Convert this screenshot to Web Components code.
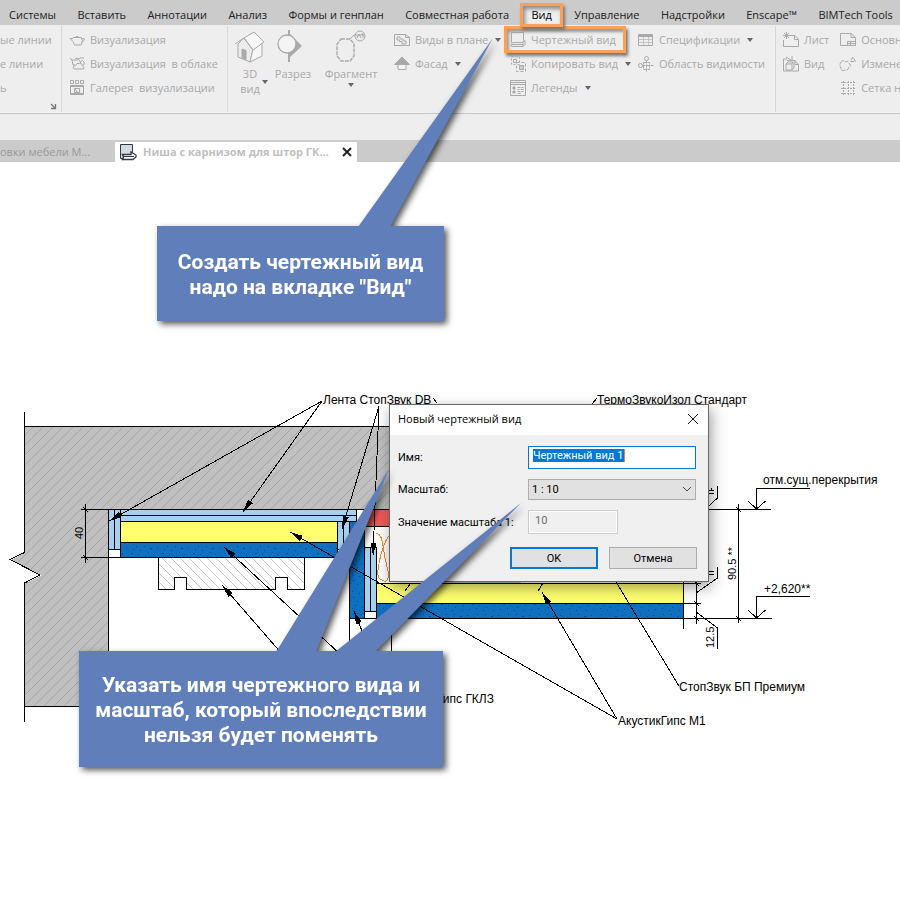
<!DOCTYPE html>
<html lang="ru">
<head>
<meta charset="utf-8">
<title>Чертежный вид</title>
<style>
html, body { margin: 0; background: #fff; }
body { font: 11px/16px "Open Sans", "Noto Sans", sans-serif; color: #222; overflow-x: hidden; }
</style>
</head>
<body>
<app-shell></app-shell>
<script>
const ICONS = {
  teapot: '<path d="M4 5.500h8l1.500 3-1.500 4.500H5.500L4 9.500 1 6.500h3M6 5.500Q8 3 10 5.500M13 7q2.500-1.500 2.500 0T12.800 10.500"/>',
  cloud: '<path d="M3 4h6l2-2h4M3 4 1 2M3 4l1 5h2M6 3q2-2 4 0M10 4l2 3M5 13q-2-3 1.500-3.500 1-3 4-2 3-.5 3 2.500 2.500 1 1 3zM11 6q3-3 4 0t-1 3"/>',
  gallery: '<path d="M1.500 .5h3v3h-3zM6.500 .5h3v3h-3zM11.500 .5h3v3h-3z"/><path d="M1.500 5.500h13v9h-13z"/><path d="M1.500 6.500h13M1.500 13.500h13"/><path d="M5.500 8.500h5v4h-5zM6 9l2 3"/>',
  plan: '<path d="M.5 2.500h11l4 3v8H.5zM11.500 2.500v3h4M3 5h3v2h3v2h3v3H8V9.500H5.500V8H3z"/>',
  elevation: '<path d="M8 1 .5 8.500h15z" fill="currentColor"/><path d="M4 8.500h8v5H4z" fill="#f4f4f4"/>',
  drafting: '<path d="M1.500 .5h12v8M1.500 .5v10M3 10.500h9l3-2v4l-2 2H1.500q-2-2 1.500-4M2 12.500h11M13 14.500v-4"/>',
  duplicate: '<path d="M1.500 .5h8v8h-8z" stroke-dasharray="2 2"/><path d="M3.500 3.500h3v3h-3z"/><path d="M6.500 6.500h9v9h-9z" stroke-dasharray="3 2"/><path d="M9.500 9.500h4v4h-4z" fill="#ccc"/>',
  legend: '<path d="M.5 .5h15v15H.5z"/><path d="M1 2.500h14M1 4.500h14"/><path d="M3 7h2v2H3z" fill="currentColor"/><circle cx="4" cy="12" r="1.200" fill="currentColor"/><path d="M7.500 7.500h3m1 0h2M7.500 9.500h2m1 0h3M7.500 11.500h3m1 0h2M7.500 13.500h3"/>',
  table: '<path d="M.5 2.500h14v11H.5zM.5 4.500h14"/><path d="M.5 7.500h14M.5 10.500h14M5.500 5v8M10.500 5v8" stroke="#c4c4c4"/><path d="M1 3.500h13" />',
  scope: '<circle cx="8.500" cy="2.500" r="2"/><circle cx="2.500" cy="9.500" r="2"/><path d="M8.500 4.500V16M4.500 9.500H16M5.500 6.500h6v7h-6z" stroke-dasharray="3 1"/>',
  sheet: '<path d="M7 3.500h5l3.500 4v7H.5V8M11.500 3.500v4h4M3.500 0v7M0 3.500h7M1 1l5 5M6 1 1 6"/>',
  place: '<path d="M9 4.500h3l3.500 4v6.500H.5v-12H4M12 4.500v4h3.500M3 1l5 3M9 0v4.500H4M3 8h6v6H3zM3 8l2-2h5L9 8m0 6 2-2V6"/>',
  titleblock: '<path d="M.5 1.500H11l4.500 4v8H.5zM11 1.500v4h4.500M7.500 9.500h8v4h-8zM10.500 9.500v4M7 11.500h8"/>',
  revision: '<path d="M13 1 10.500 5.500h5zM1 6q2-3 4 0 3-2 4 1 3 3 0 4-1 4-4 3-4 2-4-2Q-1 9 1 6z" stroke-dasharray="4 1"/>',
  grid: '<path d="M1 2.500h14M1 8.500h14M1 13.500h14M3.500 1v14M8.500 1v14M13.500 1v14" stroke-dasharray="2 1"/>',
  launcher: '<path d="m6 6 4 4M10.500 6v4.500H6" stroke="#777" stroke-width="1.300"/>',
  house: '<path d="M4 14 10 8l9 11-3 13-12-5z" fill="#ececec"/><path d="m16 32 12-6V12l-9 7z" fill="#f6f6f6"/><path d="m10 8 10-6 10 10-11 8z" fill="#f8f8f8"/><path d="m1 14 9-6 9 12"/><path d="m8 19 4 1.500v9L8 28z" fill="#aaa"/>',
  section: '<path d="M12 0v32" stroke-width="2"/><path d="M12 3l13 13-13 12z" fill="#aaa" stroke="none"/><circle cx="10" cy="14" r="9" fill="#f4f4f4" stroke-width="1.300"/>',
  callout: '<path d="M6 9h9l4 5v12l-4 5H6l-4-5V14z" stroke-dasharray="4 1" stroke-width="1.400"/><path d="m15 9 4-4h11"/><circle cx="25" cy="6" r="5"/><path d="M22 8l2-4 2 4M26 4h2v4"/>'
};

const define = (name, html, init) => {
  const template = document.createElement('template');
  template.innerHTML = html;
  customElements.define(name, class extends HTMLElement {
    connectedCallback() {
      if (this.shadowRoot) return;
      const root = this.attachShadow({ mode: 'open' });
      root.append(template.content.cloneNode(true));
      if (init) init(this, root);
    }
  });
};

define('ui-icon', `<style>:host{display:block;flex:none;width:16px;height:16px}svg{display:block;width:100%;height:100%;overflow:visible;fill:none;stroke:currentColor}</style><svg aria-hidden="true"></svg>`,
  (el, root) => {
    const svg = root.querySelector('svg');
    svg.setAttribute('viewBox', el.hasAttribute('large') ? '0 0 32 32' : '0 0 16 16');
    svg.innerHTML = ICONS[el.getAttribute('name')];
  });

define('ribbon-item', `<style>
:host{display:block;position:relative;color:#a9a9a9}
button{display:flex;align-items:center;gap:5px;height:24px;margin:0;padding:0;border:0;background:none;color:inherit;font:inherit;white-space:pre}
i{display:none;border:3px solid transparent;border-top:4px solid #666;border-bottom:0;margin-left:2px}
:host([menu]) i{display:block}
:host([big]) button{flex-direction:column;gap:4px;width:100%;height:auto;line-height:15px;padding-top:2px;text-align:center}
:host([big]) ui-icon{width:32px;height:32px}
:host([big]) i{margin:-2px 0 0}
:host([side]) i{position:absolute;right:4px;top:54px}
:host([marked])::after{content:"";position:absolute;inset:-2px -2px -1px -6px;border:3px solid #fba056;box-shadow:2px 3px 3px #777,inset 2px 3px 3px #999;pointer-events:none}
</style><button type="button"><span><slot></slot></span><i></i></button>`,
  (el, root) => {
    const name = el.getAttribute('icon');
    if (!name) return;
    const icon = document.createElement('ui-icon');
    icon.setAttribute('name', name);
    if (el.hasAttribute('big')) icon.setAttribute('large', '');
    root.querySelector('button').prepend(icon);
  });

define('menu-tabs', `<style>
:host{display:block;background:#cbcbcb}
nav{display:flex;justify-content:space-between;align-items:center;height:25px;padding:4px 7px 0 9px;box-sizing:border-box}
button{border:0;background:none;padding:0;font:inherit;color:#222;white-space:nowrap}
.on{position:relative;z-index:1;margin:0 -10px;padding:0 8px;height:24px;border:3px solid #fba056;background:#eee;box-shadow:2px 3px 3px #777,inset 2px 3px 4px #888;color:#000}
</style><nav></nav>`, (el, root) => {
  for (const t of ['Системы','Вставить','Аннотации','Анализ','Формы и генплан','Совместная работа','Вид','Управление','Надстройки','Enscape™','BIMTech Tools']) {
    const b = document.createElement('button');
    b.type = 'button'; b.textContent = t; if (t === 'Вид') b.className = 'on';
    root.querySelector('nav').append(b);
  }
});

define('ribbon-panel', `<style>:host{display:flex;position:relative;box-sizing:border-box;height:86px;border-right:1px solid #d8d8d8;padding-top:2px}</style><slot></slot>`);
define('ribbon-stack', `<style>:host{display:block;flex:none}</style><slot></slot>`);

define('ribbon-bar', `<style>
:host{display:block;background:#eee;border-bottom:1px solid #c8c8c8;overflow:hidden}
.row{display:flex;padding:1px 0}
.a{flex:none;width:62px}.b{flex:none;width:166px;padding-left:7px}.c{flex:1;min-width:0}.d{flex:none;width:124px;padding-left:7px;border:0;gap:11px}
.a ui-icon{position:absolute;right:0;bottom:-2px}
.v{width:44px}.w{width:42px}.x{width:74px;margin-right:6px}
.p{width:116px}.q{width:128px}
.q ribbon-item[marked]{width:114px}
</style><div class="row">
<ribbon-panel class="a"><ribbon-stack><ribbon-item>ые линии</ribbon-item><ribbon-item>е линии</ribbon-item><ribbon-item>ь</ribbon-item></ribbon-stack><ui-icon name="launcher"></ui-icon></ribbon-panel>
<ribbon-panel class="b"><ribbon-stack><ribbon-item icon="teapot">Визуализация</ribbon-item><ribbon-item icon="cloud">Визуализация  в облаке</ribbon-item><ribbon-item icon="gallery">Галерея  визуализации</ribbon-item></ribbon-stack></ribbon-panel>
<ribbon-panel class="c">
<ribbon-item class="v" big side menu icon="house">3D<br>вид</ribbon-item><ribbon-item class="w" big icon="section">Разрез</ribbon-item><ribbon-item class="x" big menu icon="callout">Фрагмент</ribbon-item>
<ribbon-stack class="p"><ribbon-item menu icon="plan">Виды в плане</ribbon-item><ribbon-item menu icon="elevation">Фасад</ribbon-item></ribbon-stack>
<ribbon-stack class="q"><ribbon-item marked icon="drafting">Чертежный вид</ribbon-item><ribbon-item menu icon="duplicate">Копировать вид</ribbon-item><ribbon-item menu icon="legend">Легенды</ribbon-item></ribbon-stack>
<ribbon-stack><ribbon-item menu icon="table">Спецификации</ribbon-item><ribbon-item icon="scope">Область видимости</ribbon-item></ribbon-stack>
</ribbon-panel>
<ribbon-panel class="d"><ribbon-stack><ribbon-item icon="sheet">Лист</ribbon-item><ribbon-item icon="place">Вид</ribbon-item></ribbon-stack><ribbon-stack><ribbon-item icon="titleblock">Основн</ribbon-item><ribbon-item icon="revision">Измене</ribbon-item><ribbon-item icon="grid">Сетка н</ribbon-item></ribbon-stack></ribbon-panel>
</div>`);

define('document-tabs', `<style>
:host{display:flex;align-items:flex-end;height:22px;background:#cbcbcb;border-top:26px solid #eee}
button{font:inherit;border:0;background:none;padding:0;color:inherit;text-align:left;white-space:nowrap}
.old{width:115px;height:20px;color:#999}
.tab{display:flex;align-items:center;width:242px;height:20px;background:#fff;box-sizing:border-box;padding:0 5px;color:#bfbfbf;font-weight:700}
.name{flex:1;padding-left:6px}
svg{display:block;fill:none;stroke:#303745}
</style><button class="old" type="button">овки мебели М...</button><div class="tab">
<svg width="17" height="17"><path d="M.5 .5h12v14H.5z" fill="#d5dae2"/><path d="M2.500 10.500H11V8l5 3v2l-3 2.500H2.500q2-2.500 0-5z" fill="#fff" stroke-width="1.300"/><path d="M3 12.500h11" /></svg>
<button class="name" type="button">Ниша с карнизом для штор ГК...</button><button type="button" aria-label="Закрыть"><svg width="10" height="10"><path d="m1 1 8 8M9 1 1 9" stroke="#222" stroke-width="2"/></svg></button></div>`);

define('section-drawing', `<style>
:host{display:block}svg{display:block;shape-rendering:crispEdges;fill:none;stroke:#000}
text{fill:#000;stroke:none;font:12px "Liberation Sans",sans-serif}.n{font-size:11px}
.l{fill:#a6d0f0}.y{fill:#ffff70}.b{fill:url(#speck)}.lead{marker-start:url(#arrow)}
</style><svg width="900" height="738" viewBox="0 162 900 738">
<defs>
<pattern id="concrete" width="10" height="10" patternUnits="userSpaceOnUse"><path d="M0 0h10v10H0z" fill="#c0c0c0" stroke="none"/><path d="M-1 11 11-1M-1 1 1-1M9 11l2-2" stroke="#a6a6a6"/></pattern>
<pattern id="wood" width="9" height="9" patternUnits="userSpaceOnUse"><path d="M0 0h9v9H0z" fill="#fff" stroke="none"/><path d="m-1-1 11 11M8-1l2 2M-1 8l2 2" stroke="#c4c4c4"/></pattern>
<pattern id="speck" width="31" height="17" patternUnits="userSpaceOnUse"><path d="M0 0h31v17H0z" fill="#0f70c0" stroke="none"/><path d="M2 3h1M7 9h2M12 2h1M16 6h1M21 12h1M26 4h2M29 10h1M4 14h1M11 13h1M18 15h1M24 8h1M14 10h1M20 2h1M9 5h1M28 15h1" stroke="#0a4c8c"/></pattern>
<marker id="arrow" markerUnits="userSpaceOnUse" markerWidth="15" markerHeight="6" refX="0" refY="3" orient="auto"><path d="M0 3 13 0v6z" fill="#000" stroke="none"/></marker>
</defs>
<path d="M24.500 426.500h660v83h-576v197h-84v-123l16-8-30-15 14-8z" fill="url(#concrete)" stroke="none"/>
<path d="M24.500 412v140.500l-14.500 7 30 15.500-15.500 8V722M24.500 426.500h665M24.500 706.500h84M108.500 509v198M81 509.500h610M81 557.500h270"/>
<path d="M85.500 504v59M83 507l5 5M83 555l5 5"/>
<path d="M108.500 549.500h12v8h-12z" fill="#fff"/>
<path class="l" d="M108.500 509.500h12v40h-12zM120.500 509.500h236v12h-236zM337.500 521.500h12v28h-12z"/>
<path d="M114.500 509v40M120 515.500h237M343.500 521v28"/>
<path class="y" d="M120.500 521.500h217v21h-217z"/><path class="b" d="M120.500 542.500h217v15h-217z"/>
<path d="M356.500 509.500h8v12h-8z" fill="#fff"/><path d="M364.500 509.500h40v17h-40z" fill="#f25a5a"/>
<path class="b" d="M349.500 521.500h15v97h-15z"/><path class="l" d="M364.500 547.500h12v64h-12z"/><path d="M370.500 547v64"/><path d="M364.500 611.500h12v7h-12z" fill="#fff"/>
<path d="M376 534q5-2 7 12t6 29q-2 9-7 5-5-1-4-10 2-15 6-25t7-10" stroke="#f08820"/>
<path class="y" d="M376.500 583.500h307v20h-307z"/><path class="b" d="M376.500 603.500h307v15h-307z"/><path class="l" d="M450 578h71v5h-71z" stroke="none"/>
<path d="M376 583.500h325M683 603.500h18M349 618.500h423M683.500 520v109M349.500 618v50M391.500 618v50"/>
<path d="M158.500 557.500v32h16v-12h12v12h89v-12h12v12h17v-32z" fill="url(#wood)"/>
<path class="lead" d="M109 521 322 401"/><path class="lead" d="M243 512 322 401"/><path class="lead" d="M342 529 379 406"/><path class="lead" d="M373 556 379 406"/>
<path class="lead" d="M290 532 617 719"/><path class="lead" d="M224 547 340 654"/><path class="lead" d="m222 585 60 69"/><path class="lead" d="m354 611 12 30"/><path class="lead" d="m542 592 75 127"/>
<path d="m616 582 63 104M405 591l6-8M538 591l5-8M433 398l4 5M592 404l5-6"/>
<path d="M738.500 504v119M736 507l5 5M736 616l5 5M696.500 578v46M694 581l5 5M694 601l5 5M694 616l5 5"/>
<path d="M684 509.500h87M756.500 509v-21H810M748 501l8.500 8 9-8M756.500 618v-21.500H810M748 610l8.500 8 9-8"/>
<path d="m700 514 17.500-16v-12M711.500 488v3M708 490.500h6M708 493.500h6M696 593l21.500-15v-11M708 571.500h6M708 574.500h6M696 612l21.500 16v21"/>
<text x="323" y="404">Лента СтопЗвук DB</text><text x="597" y="404">ТермоЗвукоИзол Стандарт</text><text x="763" y="484">отм.сущ.перекрытия</text><text x="764" y="593">+2,620**</text>
<text x="679" y="691">СтопЗвук БП Премиум</text><text x="618" y="725">АкустикГипс М1</text><text x="494" y="703" text-anchor="end">Гипс ГКЛЗ</text>
<text class="n" transform="translate(83 539) rotate(-90)">40</text><text class="n" transform="translate(736 580) rotate(-90)">90.5 **</text><text class="n" transform="translate(714 648) rotate(-90)">12.5</text>
</svg>`);

define('view-dialog', `<style>
:host{display:block;box-sizing:border-box;border:1px solid #666;background:#f0f0f0;box-shadow:2px 5px 14px #0006;color:#000}
header{display:flex;align-items:center;justify-content:space-between;height:30px;box-sizing:border-box;padding:0 9px 2px 8px;background:#fff}
header span{font-size:11px}
header button{padding:0;border:0;background:none}svg{display:block;fill:none;stroke:#111}
form{display:grid;grid-template-columns:130px 1fr;row-gap:10px;align-items:center;padding:11px 12px 12px 8px;font:11px/13px Roboto,"Noto Sans",sans-serif}
label{white-space:nowrap}
input,select,.act button{box-sizing:border-box;margin:0;font:inherit;border-radius:0;width:100%;color:#000}
#name{height:23px;border:1px solid #0078d7;padding:2px 4px 6px;color:#fff;background:linear-gradient(90deg,#0078d7 91px,#f08030 91px) 4px 2px/92px 13px no-repeat #fff}
.sel{position:relative}select{display:block;height:21px;appearance:none;border:1px solid #adadad;background:#e1e1e1;padding:0 3px}
.sel svg{position:absolute;right:4px;top:7px;stroke:#444}
#value{width:90px;height:24px;border:1px solid #ccc;outline:1px solid #fff;outline-offset:-2px;background:#f0f0f0;padding:2px 6px 5px;color:#6d6d6d}
.act{grid-column:2;display:flex;gap:11px;justify-content:flex-end;margin:3px -1px 0 -19px}
.act button{width:88px;height:22px;padding:0;background:#e1e1e1;border:1px solid #adadad}.act .ok{border:2px solid #0078d7}
</style><header><span>Новый чертежный вид</span><button type="button" aria-label="Закрыть"><svg width="12" height="12"><path d="m1 1 10 10M11 1 1 11"/></svg></button></header>
<form><label for="name">Имя:</label><input id="name" value="Чертежный вид 1">
<label for="scale">Масштаб:</label><div class="sel"><select id="scale"><option>1 : 10</option></select><svg width="10" height="7"><path d="m1 1 4 4 4-4"/></svg></div>
<label for="value">Значение масштаба 1:</label><input id="value" value="10" disabled>
<div class="act"><button class="ok" type="button">OK</button><button type="button">Отмена</button></div></form>`);

define('note-callout', `<style>
:host{display:block;filter:drop-shadow(3px 3px 3px #000a);color:#fff}
svg{position:absolute;left:0;top:0;width:1px;height:1px;overflow:visible;fill:#5f7eba}
div{display:grid;place-items:center;box-sizing:border-box;height:100%;padding-top:2px;background:#5f7eba;text-align:center;font:700 21px/25px Roboto,sans-serif;white-space:nowrap;position:relative}
</style><svg aria-hidden="true"></svg><div><span><slot></slot></span></div>`, (el, root) => {
  root.querySelector('svg').innerHTML = el.getAttribute('tails').split(';').map(p => `<polygon points="${p}"/>`).join('');
});

define('app-shell', `<style>
:host{display:block}
main{position:relative}
view-dialog,note-callout{position:absolute}
view-dialog{left:389px;top:242px;width:320px}
.one{left:157px;top:64px;width:287px;height:95px}
.two{left:79px;top:489px;width:364px;height:116px}
</style><menu-tabs></menu-tabs><ribbon-bar></ribbon-bar><document-tabs></document-tabs>
<main><section-drawing></section-drawing><view-dialog></view-dialog>
<note-callout class="one" tails="336,-188 201,1 233,1">Создать чертежный вид<br>надо на вкладке "Вид"</note-callout>
<note-callout class="two" tails="310,-182 197,1 237,1;442,-148 256,1 296,1">Указать имя чертежного вида и<br>масштаб, который впоследствии<br>нельзя будет поменять</note-callout></main>`);
</script>
</body>
</html>
